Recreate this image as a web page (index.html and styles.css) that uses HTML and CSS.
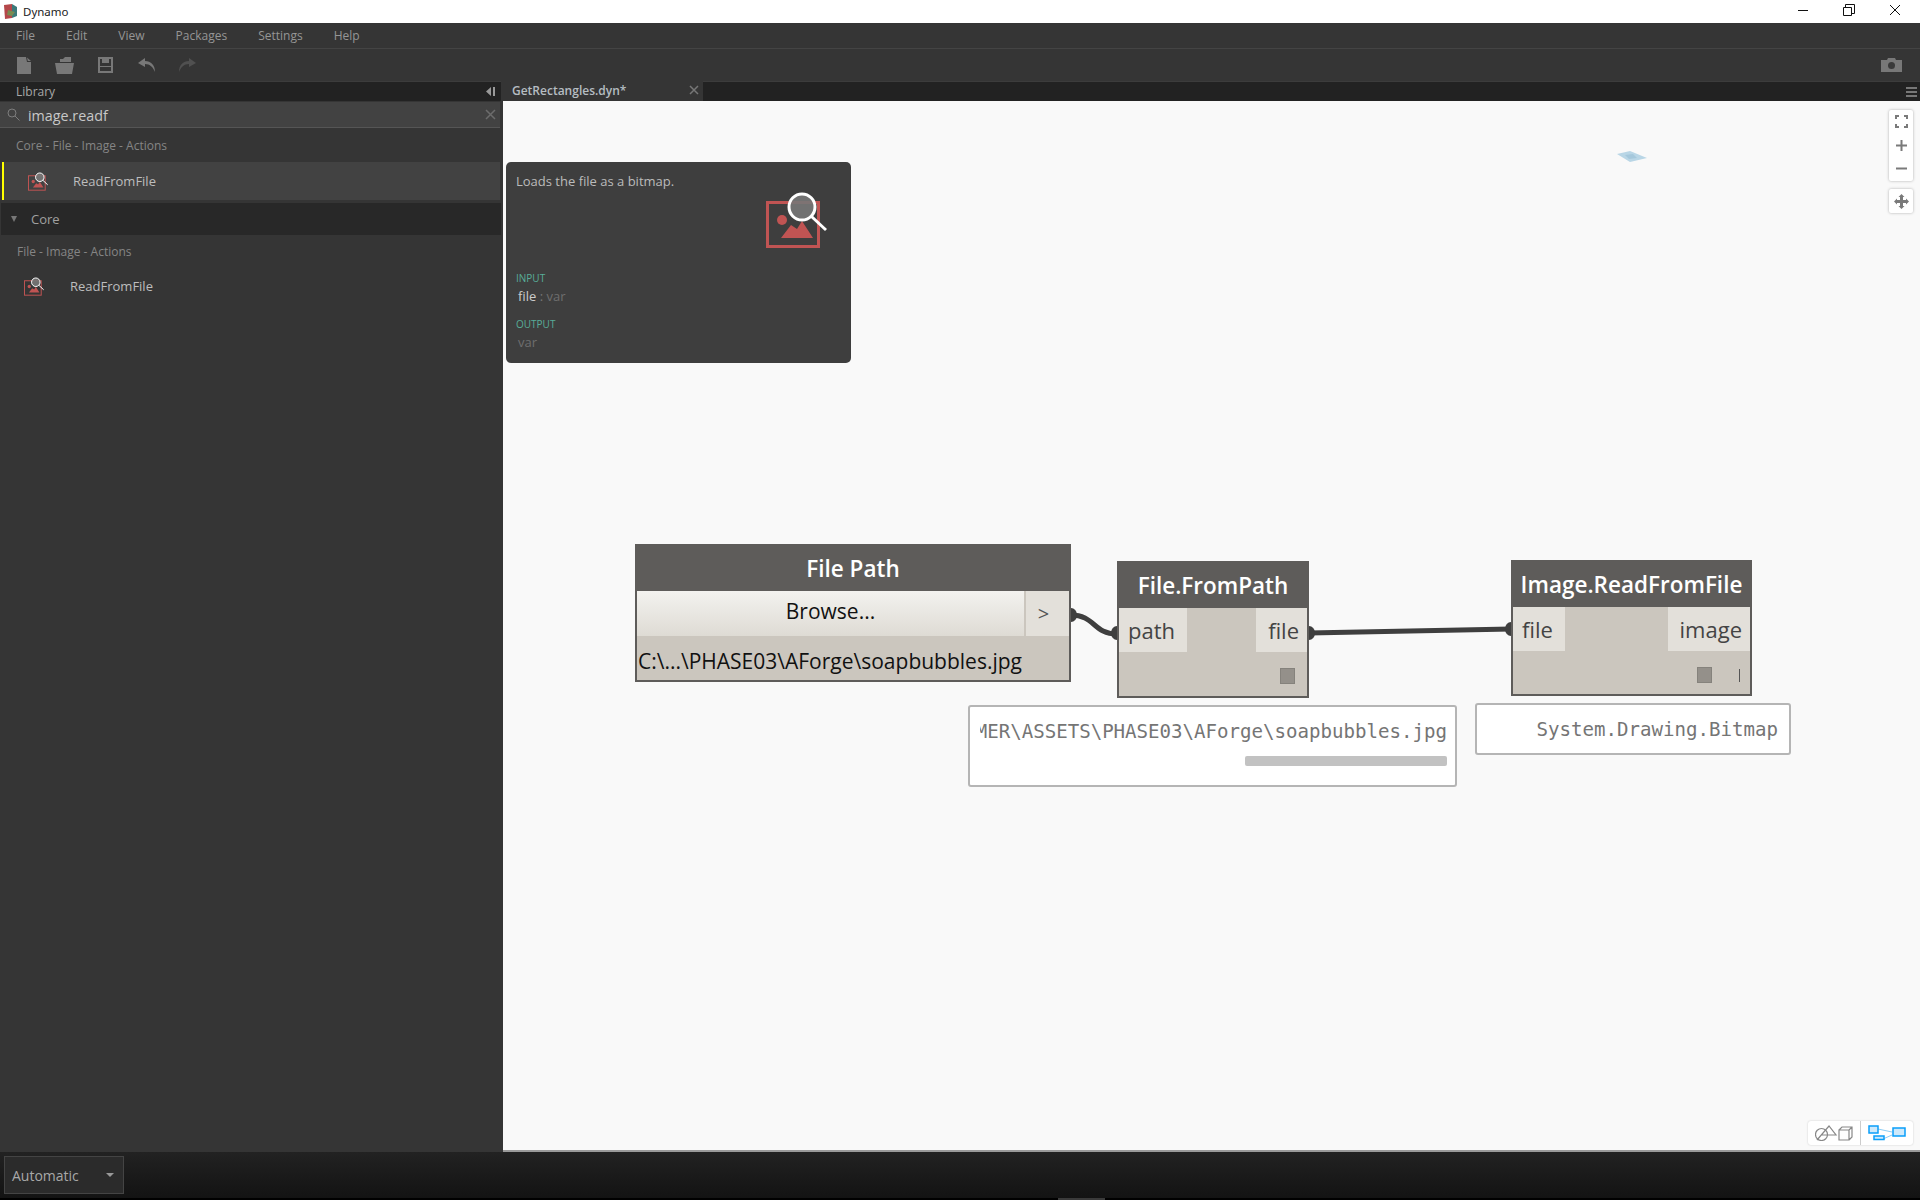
FILE: index.html
```html
<!DOCTYPE html>
<html lang="en">
<head>
    <meta charset="UTF-8">
    <title>Dynamo</title>
    <link rel="stylesheet" href="styles.css">
</head>
<body>
    <svg class="defs" width="0" height="0">
        <symbol id="image-icon" viewBox="0 0 61 58">
            <rect x="1.5" y="11.5" width="51" height="44" fill="none" stroke="#c05453" stroke-width="3"/>
            <circle cx="16" cy="29" r="5" fill="#c05453"/>
            <path d="M15 47 L25 34 L31 38 L36 30 L47 47 Z" fill="#c05453"/>
            <circle cx="36" cy="16" r="13" fill="#777" fill-opacity=".9" stroke="#fff" stroke-width="3"/>
            <path d="M45.5 25.5 L60 39" stroke="#fff" stroke-width="3" fill="none"/>
        </symbol>
    </svg>

    <div class="titlebar">
        <svg class="logo" width="13" height="15" viewBox="0 0 13 15">
            <path d="M0 1 L8 0 L8 14 L1 15 Z" fill="#b5474a"/>
            <path d="M8 0 L13 3 L13 12 L8 14 Z" fill="#3c7a7a"/>
            <path d="M4 6 L11 8 L8 12 L3 11 Z" fill="#7a8a50"/>
        </svg>
        <span class="app-name">Dynamo</span>
        <div class="win-controls">
            <svg width="14" height="14" viewBox="0 0 14 14"><path d="M2 7.5 H12" stroke="#111" fill="none"/></svg>
            <svg width="14" height="14" viewBox="0 0 14 14"><path d="M3.5 4.5 V1.5 H12.5 V10.5 H9.5 M1.5 4.5 H9.5 V12.5 H1.5 Z" stroke="#111" fill="none"/></svg>
            <svg width="14" height="14" viewBox="0 0 14 14"><path d="M2 2 L12 12 M12 2 L2 12" stroke="#111" fill="none"/></svg>
        </div>
    </div>

    <nav class="menubar">
        <span>File</span>
        <span>Edit</span>
        <span>View</span>
        <span>Packages</span>
        <span>Settings</span>
        <span>Help</span>
    </nav>

    <div class="toolbar">
        <svg class="tool tool-new" width="14" height="17" viewBox="0 0 14 17"><path d="M0 0 H9 L10 5 L14 5 V17 H0 Z M10 0.5 L14 4 H10.8 Z" fill="#787878"/></svg>
        <svg class="tool tool-open" width="20" height="17" viewBox="0 0 20 17"><path d="M5 5 V2 H8 L10 0 H16 V5 Z M0 6 H19 L17 17 H2 Z" fill="#787878"/></svg>
        <svg class="tool tool-save" width="15" height="16" viewBox="0 0 15 16"><path d="M1 1 H14 V15 H1 Z" fill="none" stroke="#787878" stroke-width="2"/><path d="M4 1 H11 V6 H4 Z M1 9 H14 V10 H1 Z" fill="#787878"/></svg>
        <svg class="tool tool-undo" width="18" height="14" viewBox="0 0 18 14"><path d="M7 0 L0 5 L7 9 V6 C12 6 15 9 17 14 C17 7 13 3 7 3 Z" fill="#787878"/></svg>
        <svg class="tool tool-redo" width="18" height="14" viewBox="0 0 18 14"><path d="M11 0 L18 5 L11 9 V6 C6 6 3 9 1 14 C1 7 5 3 11 3 Z" fill="#505050"/></svg>
        <svg class="tool-camera" width="21" height="14" viewBox="0 0 21 14"><path d="M1 2 H6 L7 0 H14 L15 2 H21 V14 H0 V2 Z" fill="#787878"/><circle cx="10.5" cy="7.5" r="3.5" fill="#3a3a3a"/></svg>
    </div>

    <div class="main">
        <aside class="library">
            <div class="library-head">
                <span>Library</span>
                <svg width="9" height="9" viewBox="0 0 9 9"><path d="M5 0 V9 L0 4.5 Z M7 0 H9 V9 H7 Z" fill="#999"/></svg>
            </div>
            <div class="search">
                <svg width="13" height="13" viewBox="0 0 13 13"><circle cx="5" cy="5" r="4" fill="none" stroke="#7d7d7d"/><path d="M8 8 L12.5 12.5" stroke="#7d7d7d"/></svg>
                <span class="search-text">image.readf</span>
                <svg class="search-clear" width="11" height="11" viewBox="0 0 11 11"><path d="M1 1 L10 10 M10 1 L1 10" stroke="#6c6c6c" stroke-width="1.5"/></svg>
            </div>
            <div class="category">Core - File - Image - Actions</div>
            <div class="result selected">
                <svg class="node-icon" width="20" height="19" viewBox="0 0 61 58"><use href="#image-icon"/></svg>
                <span>ReadFromFile</span>
            </div>
            <div class="group-head">
                <span class="caret"></span>
                <span>Core</span>
            </div>
            <div class="category sub">File - Image - Actions</div>
            <div class="result plain">
                <svg class="node-icon" width="20" height="19" viewBox="0 0 61 58"><use href="#image-icon"/></svg>
                <span>ReadFromFile</span>
            </div>
        </aside>

        <section class="workspace">
            <div class="tabs">
                <div class="tab">
                    <span>GetRectangles.dyn*</span>
                    <svg width="10" height="10" viewBox="0 0 10 10"><path d="M1 1 L9 9 M9 1 L1 9" stroke="#777" stroke-width="1.5"/></svg>
                </div>
                <div class="tab-rest">
                    <svg width="11" height="10" viewBox="0 0 11 10"><path d="M0 0 H11 V2 H0 Z M0 4 H11 V6 H0 Z M0 8 H11 V10 H0 Z" fill="#777"/></svg>
                </div>
            </div>

            <div class="canvas">
                <svg class="wires" width="1417" height="1049" viewBox="0 0 1417 1049">
                    <path d="M568 514 C592 514 590 533 614 533" fill="none" stroke="#3f3f3f" stroke-width="5"/>
                    <path d="M806 532 L1008 528" fill="none" stroke="#3f3f3f" stroke-width="5"/>
                    <ellipse cx="568" cy="514" rx="6" ry="7" fill="#3f3f3f"/>
                    <ellipse cx="614" cy="532" rx="6" ry="7" fill="#3f3f3f"/>
                    <ellipse cx="806" cy="532" rx="6" ry="7" fill="#3f3f3f"/>
                    <ellipse cx="1008" cy="528" rx="6" ry="7" fill="#3f3f3f"/>
                    <path d="M1114 53 L1127 50 L1144 57 L1127 61 Z" fill="#b9d6e6"/>
                    <path d="M1122 54 L1130 53 L1134 57 L1126 58 Z" fill="#a5c8dc"/>
                </svg>

                <div class="tooltip">
                    <div class="tip-desc">Loads the file as a bitmap.</div>
                    <svg class="tip-icon" width="61" height="58" viewBox="0 0 61 58"><use href="#image-icon"/></svg>
                    <div class="tip-label">INPUT</div>
                    <div class="tip-port"><b>file</b> : <i>var</i></div>
                    <div class="tip-label tip-output">OUTPUT</div>
                    <div class="tip-port"><i>var</i></div>
                </div>

                <div class="node node-filepath">
                    <div class="node-title">File Path</div>
                    <div class="browse-row">
                        <div class="browse">Browse...</div>
                        <div class="browse-arrow">&gt;</div>
                    </div>
                    <div class="path-row">C:\...\PHASE03\AForge\soapbubbles.jpg</div>
                </div>

                <div class="node node-frompath">
                    <div class="node-title">File.FromPath</div>
                    <div class="ports">
                        <span class="port port-in">path</span>
                        <span class="port port-out">file</span>
                    </div>
                    <div class="node-foot"><span class="lacing"></span></div>
                </div>

                <div class="node node-readfile">
                    <div class="node-title">Image.ReadFromFile</div>
                    <div class="ports">
                        <span class="port port-in">file</span>
                        <span class="port port-out">image</span>
                    </div>
                    <div class="node-foot"><span class="lacing"></span><span class="tick"></span></div>
                </div>

                <div class="preview preview-path">
                    <div class="preview-text">C:\DYNAMOPRIMER\ASSETS\PHASE03\AForge\soapbubbles.jpg</div>
                    <div class="preview-scroll"></div>
                </div>
                <div class="preview preview-bitmap">
                    <div class="preview-text">System.Drawing.Bitmap</div>
                </div>

                <div class="nav-buttons">
                    <div class="nav-box">
                        <svg width="13" height="13" viewBox="0 0 13 13"><path d="M1 4 V1 H4 M9 1 H12 V4 M12 9 V12 H9 M4 12 H1 V9" fill="none" stroke="#7a7a7a" stroke-width="2"/></svg>
                        <svg width="11" height="11" viewBox="0 0 11 11"><path d="M5.5 0 V11 M0 5.5 H11" stroke="#7a7a7a" stroke-width="2"/></svg>
                        <svg width="11" height="11" viewBox="0 0 11 11"><path d="M0 5.5 H11" stroke="#7a7a7a" stroke-width="2"/></svg>
                    </div>
                    <div class="nav-box pan">
                        <svg width="15" height="15" viewBox="0 0 15 15"><path d="M7.5 0 L10.5 3 H9 V6 H12 V4.5 L15 7.5 L12 10.5 V9 H9 V12 H10.5 L7.5 15 L4.5 12 H6 V9 H3 V10.5 L0 7.5 L3 4.5 V6 H6 V3 H4.5 Z" fill="#7a7a7a"/></svg>
                    </div>
                </div>

                <div class="view-toggle">
                    <div class="view-geo">
                        <svg width="38" height="16" viewBox="0 0 38 16">
                            <circle cx="6.5" cy="9.5" r="6" fill="none" stroke="#888" stroke-width="1.2"/>
                            <path d="M2 15 L14 1 L21 10 H7" fill="none" stroke="#888" stroke-width="1.2"/>
                            <path d="M24 5 H34 V15 H24 Z M24 5 L27 2 H37 V12 L34 15 M34 5 L37 2" fill="none" stroke="#888" stroke-width="1.2"/>
                        </svg>
                    </div>
                    <div class="view-graph">
                        <svg width="38" height="16" viewBox="0 0 38 16">
                            <path d="M10 4 L24 7 M15 14 L24 10" stroke="#8ccdf5" fill="none"/>
                            <path d="M1 1 H10 V8 H1 Z M6 11 H16 V14.5 H6 Z M25 3 H37 V11 H25 Z" fill="#cde9fb" stroke="#0a9ffa" stroke-width="1.5"/>
                        </svg>
                    </div>
                </div>
            </div>
        </section>
    </div>

    <footer class="statusbar">
        <div class="run-mode">
            <span>Automatic</span>
            <span class="mode-caret"></span>
        </div>
    </footer>
    <div class="bottom-strip"><span class="bottom-thumb"></span></div>
</body>
</html>
```

FILE: styles.css
```css
* {
    box-sizing: border-box;
}

body {
    margin: 0;
    height: 1200px;
    display: flex;
    flex-direction: column;
    overflow: hidden;
    background-color: #353535;
    font-family: "Open Sans", sans-serif;
    color: #999;
}

.defs {
    position: absolute;
}

/* window title */
.titlebar {
    height: 23px;
    flex: none;
    display: flex;
    align-items: center;
    background-color: #fff;
    padding-left: 4px;
}

.logo {
    margin-right: 6px;
}

.app-name {
    font-family: "Noto Sans", sans-serif;
    font-size: 11.5px;
    color: #222;
}

.win-controls {
    margin-left: auto;
    display: flex;
    gap: 32px;
    padding-right: 18px;
    padding-bottom: 3px;
}

/* menu and toolbar */
.menubar {
    height: 26px;
    flex: none;
    display: flex;
    align-items: center;
    gap: 31px;
    padding-left: 16px;
    font-size: 12px;
    color: #969696;
    background-color: #353535;
    border-bottom: 1px solid #444;
}

.toolbar {
    height: 32px;
    flex: none;
    display: flex;
    align-items: center;
    padding-left: 17px;
    padding-right: 18px;
    background-color: #353535;
}

.tool-new { margin-right: 24px; }
.tool-open { margin-right: 23px; }
.tool-save { margin-right: 25px; }
.tool-undo { margin-right: 22px; }
.tool-camera { margin-left: auto; }

.main {
    flex: 1;
    display: flex;
    min-height: 0;
}

/* library panel */
.library {
    width: 503px;
    flex: none;
    background-color: #353535;
}

.library-head {
    height: 20px;
    margin-right: 2px;
    display: flex;
    align-items: center;
    justify-content: space-between;
    padding: 0 6px 0 16px;
    font-size: 12px;
    color: #a8a8a8;
    background-color: #222;
    border-top: 1px solid #3c3c3c;
}

.search {
    height: 26px;
    margin-top: 1px;
    margin-right: 3px;
    display: flex;
    align-items: center;
    padding: 0 4px 0 7px;
    background-color: #424242;
    border-bottom: 1px solid #555;
}

.search-text {
    margin-left: 8px;
    padding-top: 2px;
    font-size: 14.3px;
    color: #c8c8c8;
}

.search-clear {
    margin-left: auto;
}

.category {
    height: 34px;
    display: flex;
    align-items: center;
    padding-left: 16px;
    font-size: 12px;
    color: #858585;
}

.category.sub {
    padding-left: 17px;
    padding-bottom: 2px;
}

.result {
    height: 38px;
    display: flex;
    align-items: center;
    font-size: 13px;
    color: #bdbdbd;
}

.result.selected {
    margin: 0 3px 0 2px;
    padding-left: 24px;
    background-color: #424242;
    border-left: 2px solid #ffff00;
}

.result.plain {
    height: 34px;
    padding-left: 24px;
}

.result .node-icon {
    margin-right: 26px;
}

.result.selected .node-icon {
    margin-right: 25px;
}

.group-head {
    height: 32px;
    margin: 3px 2px 0 1px;
    display: flex;
    align-items: center;
    padding-left: 10px;
    font-size: 13px;
    color: #a0a0a0;
    background-color: #282828;
}

.caret {
    width: 0;
    height: 0;
    margin-right: 14px;
    border-left: 3px solid transparent;
    border-right: 3px solid transparent;
    border-top: 6px solid #777;
}

/* workspace */
.workspace {
    flex: 1;
    display: flex;
    flex-direction: column;
    min-width: 0;
}

.tabs {
    height: 20px;
    flex: none;
    display: flex;
}

.tab {
    width: 200px;
    display: flex;
    align-items: center;
    justify-content: space-between;
    padding: 0 4px 2px 9px;
    font-size: 12px;
    font-weight: 600;
    color: #b5bdc2;
    background-color: #353535;
}

.tab-rest {
    flex: 1;
    display: flex;
    align-items: center;
    justify-content: flex-end;
    padding-right: 3px;
    background-color: #222;
    border-top: 1px solid #3c3c3c;
}

.canvas {
    flex: 1;
    position: relative;
    background-color: #f9f9f9;
    border-bottom: 2px solid #9a9a9a;
}

.wires {
    position: absolute;
    left: 0;
    top: 0;
}

/* node description popup */
.tooltip {
    position: absolute;
    left: 3px;
    top: 61px;
    width: 345px;
    height: 201px;
    padding: 10px 10px 0;
    background-color: #3e3e3e;
    border-radius: 5px;
    font-size: 13px;
    color: #bbb;
}

.tip-desc {
    height: 90px;
    line-height: 18px;
}

.tip-icon {
    position: absolute;
    left: 260px;
    top: 29px;
}

.tip-label {
    margin-top: 9px;
    font-size: 10px;
    line-height: 15px;
    color: #58ad98;
}

.tip-output {
    margin-top: 11px;
}

.tip-port {
    padding-left: 2px;
    line-height: 20px;
    color: #777;
}

.tip-port b {
    font-weight: 400;
    color: #ccc;
}

.tip-port i {
    font-style: normal;
    color: #6e6e6e;
}

/* graph nodes */
.node {
    position: absolute;
    display: flex;
    flex-direction: column;
    background-color: #cbc6be;
    border: 2px solid #5e5c5a;
    border-top: 0;
    color: #3a3a3a;
}

.node-title {
    flex: none;
    display: flex;
    align-items: center;
    justify-content: center;
    margin: 0 -2px;
    background-color: #5e5c5a;
    color: #fff;
    font-weight: 600;
    font-size: 22.5px;
    white-space: nowrap;
}

.node-filepath {
    left: 132px;
    top: 443px;
    width: 436px;
    height: 138px;
}

.node-filepath .node-title {
    height: 47px;
    padding-top: 2px;
}

.browse-row {
    height: 45px;
    flex: none;
    display: flex;
}

.browse {
    flex: 1;
    display: flex;
    align-items: center;
    justify-content: center;
    padding-bottom: 6px;
    font-size: 21px;
    color: #111;
    background: linear-gradient(#f3f2ef, #dedbd4);
}

.browse-arrow {
    width: 43px;
    margin-left: 2px;
    display: flex;
    align-items: center;
    justify-content: center;
    padding-right: 8px;
    font-size: 20px;
    color: #555;
    background-color: #e3e0da;
}

.path-row {
    flex: 1;
    padding: 5px 0 0 1px;
    display: flex;
    align-items: center;
    font-size: 21px;
    color: #111;
    white-space: nowrap;
}

.node-frompath {
    left: 614px;
    top: 460px;
    width: 192px;
    height: 137px;
}

.node-readfile {
    left: 1008px;
    top: 459px;
    width: 241px;
    height: 136px;
}

.node-frompath .node-title,
.node-readfile .node-title {
    height: 47px;
    padding-top: 2px;
}

.ports {
    height: 44px;
    flex: none;
    display: flex;
    justify-content: space-between;
}

.port {
    display: flex;
    align-items: center;
    font-size: 22px;
    color: #444;
    background-color: #e3e0da;
}

.port-in {
    padding: 0 12px 0 9px;
}

.port-out {
    padding: 0 8px 0 12px;
}

.node-foot {
    flex: 1;
    display: flex;
    align-items: center;
    justify-content: flex-end;
    padding: 4px 12px 0 0;
}

.lacing {
    width: 15px;
    height: 16px;
    background-color: #94908a;
    border: 1px solid #85827c;
}

.tick {
    width: 1px;
    height: 13px;
    margin: 2px 0 0 27px;
    background-color: #555;
}

.node-readfile .node-foot {
    padding-right: 10px;
}

/* value previews */
.preview {
    position: absolute;
    background-color: #fff;
    border: 2px solid #b5b5b5;
    border-radius: 3px;
    font-family: "DejaVu Sans Mono", monospace;
    font-size: 19.1px;
    color: #757575;
    overflow: hidden;
}

.preview-path {
    left: 465px;
    top: 604px;
    width: 489px;
    height: 82px;
    padding: 0 8px 0 10px;
}

.preview-bitmap {
    left: 972px;
    top: 602px;
    width: 316px;
    height: 52px;
    padding: 0 11px;
}

.preview-text {
    margin-top: 13px;
    white-space: nowrap;
    display: flex;
    justify-content: flex-end;
    overflow: hidden;
}

.preview-scroll {
    width: 202px;
    height: 10px;
    margin: 13px 0 0 auto;
    background-color: #c2c2c2;
    border-radius: 2px;
}

/* canvas buttons */
.nav-buttons {
    position: absolute;
    right: 7px;
    top: 9px;
    display: flex;
    flex-direction: column;
    gap: 8px;
}

.nav-box {
    width: 24px;
    height: 71px;
    display: flex;
    flex-direction: column;
    align-items: center;
    gap: 12px;
    padding-top: 5px;
    background-color: #fff;
    border-radius: 2px;
    box-shadow: 0 0 3px rgba(0,0,0,0.3);
}

.nav-box.pan {
    height: 24px;
    justify-content: center;
    padding: 0;
}

.view-toggle {
    position: absolute;
    right: 7px;
    bottom: 5px;
    width: 105px;
    height: 24px;
    display: flex;
    background-color: #fff;
    border-radius: 3px;
    box-shadow: 0 0 2px rgba(0,0,0,0.2);
}

.view-geo,
.view-graph {
    flex: 1;
    display: flex;
    align-items: center;
    justify-content: center;
}

.view-geo {
    border-right: 1px solid #ccc;
}

/* status bar */
.statusbar {
    height: 46px;
    flex: none;
    display: flex;
    align-items: center;
    padding-left: 4px;
    background: linear-gradient(#222, #131313);
}

.run-mode {
    width: 120px;
    height: 38px;
    display: flex;
    align-items: center;
    justify-content: space-between;
    padding: 0 9px 0 7px;
    font-size: 14px;
    color: #a8a8a8;
    background-color: #2b2b2b;
    border: 1px solid #444;
}

.mode-caret {
    width: 0;
    height: 0;
    border-left: 4px solid transparent;
    border-right: 4px solid transparent;
    border-top: 4px solid #999;
}

.bottom-strip {
    height: 2px;
    flex: none;
    display: flex;
    background-color: #000;
    padding-left: 1058px;
}

.bottom-thumb {
    width: 47px;
    background-color: #3a3a3a;
}
```
